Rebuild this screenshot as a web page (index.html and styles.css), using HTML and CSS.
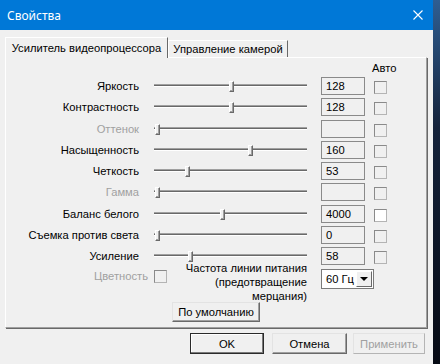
FILE: index.html
```html
<!DOCTYPE html>
<html>
<head>
    <title>Свойства</title>
    <link rel="stylesheet" href="styles.css">
</head>
<body>
    <div class="window">
        <div class="titlebar">
            <span class="title">Свойства</span>
            <svg class="close" width="10" height="10" viewBox="0 0 10 10">
                <path d="M0.5 0.5 L9.5 9.5 M9.5 0.5 L0.5 9.5" stroke="#fff" stroke-width="1.1" fill="none"/>
            </svg>
        </div>
        <div class="tabs">
            <div class="tab active">Усилитель видеопроцессора</div>
            <div class="tab">Управление камерой</div>
        </div>
        <div class="panel">
            <div class="auto-head">Авто</div>
            <div class="grid">
                <div class="label">Яркость</div>
                <div class="slider"><div class="track"></div><span class="thumb" style="left: 75px"></span></div>
                <div class="value">128</div>
                <div class="check"></div>

                <div class="label">Контрастность</div>
                <div class="slider"><div class="track"></div><span class="thumb" style="left: 75px"></span></div>
                <div class="value">128</div>
                <div class="check"></div>

                <div class="label disabled">Оттенок</div>
                <div class="slider"><div class="track"></div><span class="thumb" style="left: 1px"></span></div>
                <div class="value"></div>
                <div class="check"></div>

                <div class="label">Насыщенность</div>
                <div class="slider"><div class="track"></div><span class="thumb" style="left: 94px"></span></div>
                <div class="value">160</div>
                <div class="check"></div>

                <div class="label">Четкость</div>
                <div class="slider"><div class="track"></div><span class="thumb" style="left: 31px"></span></div>
                <div class="value">53</div>
                <div class="check"></div>

                <div class="label disabled">Гамма</div>
                <div class="slider"><div class="track"></div><span class="thumb" style="left: 1px"></span></div>
                <div class="value"></div>
                <div class="check"></div>

                <div class="label">Баланс белого</div>
                <div class="slider"><div class="track"></div><span class="thumb" style="left: 66px"></span></div>
                <div class="value">4000</div>
                <div class="check white"></div>

                <div class="label">Съемка против света</div>
                <div class="slider"><div class="track"></div><span class="thumb" style="left: 1px"></span></div>
                <div class="value">0</div>
                <div class="check"></div>

                <div class="label">Усиление</div>
                <div class="slider"><div class="track"></div><span class="thumb" style="left: 34px"></span></div>
                <div class="value">58</div>
                <div class="check"></div>
            </div>
            <div class="extra">
                <div class="color-label">Цветность</div>
                <div class="check color-check"></div>
                <div class="freq-label">Частота линии питания<br>(предотвращение<br>мерцания)</div>
                <div class="select">
                    <span class="select-text">60 Гц</span>
                    <span class="select-btn"><span class="arrow"></span></span>
                </div>
            </div>
            <div class="default-row">
                <button class="btn default-btn">По умолчанию</button>
            </div>
        </div>
        <div class="footer">
            <button class="btn ok">OK</button>
            <button class="btn cancel">Отмена</button>
            <button class="btn apply" disabled>Применить</button>
        </div>
    </div>
</body>
</html>
```

FILE: styles.css
```css
body {
    margin: 0;
    width: 440px;
    height: 364px;
    overflow: hidden;
    background: linear-gradient(#2f5e92, #14223a 35%, #060a14);
    font-family: "Liberation Sans", Arial, sans-serif;
    font-size: 11.2px;
    color: #000;
}
.window {
    width: 433px;
    height: 364px;
    background: #f0f0f0;
}
.titlebar {
    height: 30px;
    box-sizing: border-box;
    background: #0078d7;
    color: #fff;
    display: flex;
    align-items: center;
    justify-content: space-between;
    padding: 0 10px 0 7px;
    font-family: "Noto Sans", "Open Sans", sans-serif;
    font-size: 12px;
}
.close {
    display: block;
}
.tabs {
    position: relative;
    z-index: 1;
    display: flex;
    align-items: flex-end;
    height: 27px;
    box-sizing: border-box;
    padding-left: 5px;
}
.tab {
    height: 17px;
    width: 120px;
    box-sizing: border-box;
    border: 1px solid;
    border-color: #fff #696969 transparent #fff;
    border-bottom: none;
    text-align: center;
    line-height: 16px;
    white-space: nowrap;
}
.tab.active {
    width: 163px;
    height: 21px;
    margin-bottom: -1px;
    line-height: 20px;
    background: #f0f0f0;
}
.panel {
    margin: 0 6px 0 5px;
    height: 271px;
    box-sizing: border-box;
    border: 1px solid;
    border-color: #fff #a0a0a0 #a0a0a0 #fff;
    box-shadow: 1px 1px 0 #696969;
    padding-top: 2px;
}
.auto-head {
    height: 17px;
    line-height: 17px;
    padding-left: 366px;
}
.grid {
    display: grid;
    grid-template-columns: 148px 167px 53px 13px;
    grid-auto-rows: 18px;
    row-gap: 3.25px;
}
.label {
    line-height: 18px;
    text-align: right;
    padding-right: 15px;
    white-space: nowrap;
}
.disabled {
    color: #a0a0a0;
}
.slider {
    position: relative;
    width: 153px;
    height: 18px;
}
.track {
    margin-top: 7px;
    height: 1px;
    background: #696969;
    border-top: 1px solid #a0a0a0;
    border-bottom: 1px solid #fff;
}
.thumb {
    position: absolute;
    top: 4px;
    width: 5px;
    height: 11px;
    box-sizing: border-box;
    background: #f0f0f0;
    border: 1px solid;
    border-color: #fff #696969 #696969 #fff;
    box-shadow: inset -1px -1px 0 #a0a0a0;
}
.value {
    width: 44px;
    height: 18px;
    box-sizing: border-box;
    border: 1px solid #8a8a8a;
    padding-left: 4px;
    line-height: 16px;
}
.check {
    width: 13px;
    height: 13px;
    box-sizing: border-box;
    margin-top: 4px;
    border: 1px solid;
    border-color: #8a8a8a #b4b4b4 #b4b4b4 #8a8a8a;
    background: #f0f0f0;
}
.check.white {
    background: #fff;
}
.extra {
    display: flex;
    align-items: flex-start;
}
.color-label {
    width: 142px;
    margin-top: 5px;
    line-height: 13px;
    text-align: right;
    color: #a0a0a0;
}
.color-check {
    margin: 5px 0 0 6px;
}
.freq-label {
    width: 140px;
    margin-top: -4px;
    line-height: 14px;
    text-align: right;
    white-space: nowrap;
}
.select {
    display: flex;
    width: 53px;
    height: 20px;
    box-sizing: border-box;
    margin: 4px 0 0 14px;
    border: 1px solid #7a7a7a;
    background: #fff;
    padding: 1px;
}
.select-text {
    flex: 1;
    padding-left: 3px;
    line-height: 16px;
    white-space: nowrap;
}
.select-btn {
    display: flex;
    align-items: center;
    justify-content: center;
    width: 16px;
    box-sizing: border-box;
    background: #f0f0f0;
    border: 1px solid;
    border-color: #fff #696969 #696969 #fff;
}
.arrow {
    width: 0;
    height: 0;
    border-left: 4px solid transparent;
    border-right: 4px solid transparent;
    border-top: 4px solid #000;
}
.default-row {
    display: flex;
    justify-content: center;
    margin-top: -1px;
}
.btn {
    height: 20px;
    box-sizing: border-box;
    padding: 0;
    font: inherit;
    color: #000;
    background: #f0f0f0;
    border: 1px solid;
    border-color: #e3e3e3 #696969 #696969 #e3e3e3;
    box-shadow: inset -1px -1px 0 #a0a0a0;
}
.default-btn {
    width: 88px;
}
.footer {
    display: flex;
    margin-top: 5px;
    padding-left: 190px;
}
.footer .btn {
    height: 21px;
}
.ok {
    width: 74px;
    border: 1px solid #2a2a2a;
    box-shadow: inset -1px -1px 0 #7a7a7a, inset 1px 1px 0 #fff;
}
.cancel {
    width: 75px;
    margin-left: 8px;
}
.apply {
    width: 72px;
    margin-left: 6px;
    color: #a0a0a0;
    border-color: #e3e3e3 #b4b4b4 #b4b4b4 #e3e3e3;
    box-shadow: none;
}
```
